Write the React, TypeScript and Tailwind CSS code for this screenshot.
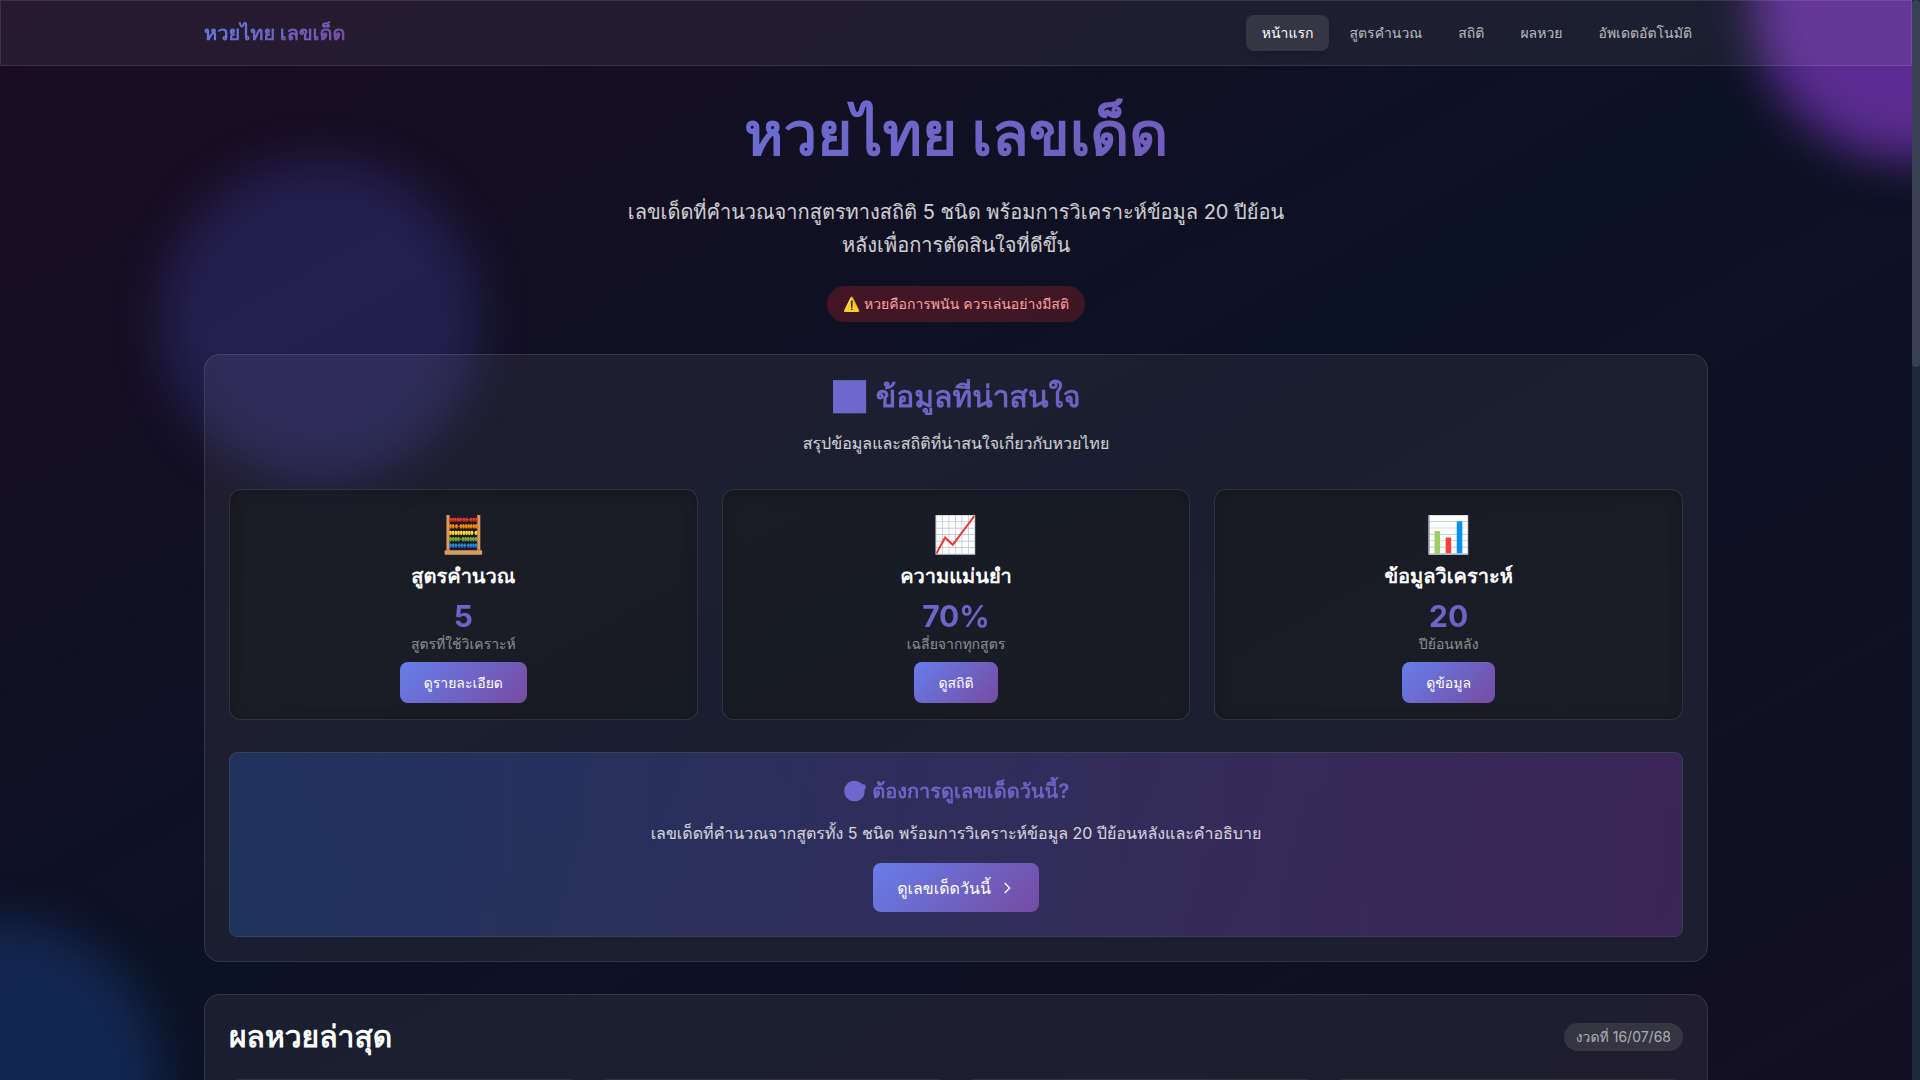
import React from "react"

const navItems = [
    { name: "หน้าแรก", active: true },
    { name: "สูตรคำนวณ", active: false },
    { name: "สถิติ", active: false },
    { name: "ผลหวย", active: false },
    { name: "อัพเดตอัตโนมัติ", active: false }
]

const stats = [
    { icon: "🧮", title: "สูตรคำนวณ", value: "5", label: "สูตรที่ใช้วิเคราะห์", action: "ดูรายละเอียด" },
    { icon: "📈", title: "ความแม่นยำ", value: "70%", label: "เฉลี่ยจากทุกสูตร", action: "ดูสถิติ" },
    { icon: "📊", title: "ข้อมูลวิเคราะห์", value: "20", label: "ปีย้อนหลัง", action: "ดูข้อมูล" }
]

const prizes = ["first", "front", "back", "last"]

const heading = "font-['Inter',sans-serif] font-bold [text-rendering:geometricPrecision]"
const gradientText = "bg-[linear-gradient(135deg,#667eea_0%,#764ba2_100%)] bg-clip-text text-transparent"
const gradientButton = "bg-[linear-gradient(135deg,#667eea_0%,#764ba2_100%)] rounded-lg text-white font-medium"
const glass = "bg-white/6 border border-white/10"

const Blobs = () => (
    <div className="absolute inset-0 overflow-hidden pointer-events-none">
        <div className="absolute -top-40 -right-40 w-80 h-80 rounded-full bg-[#ac46ff]/50 blur-xl" />
        <div className="absolute -bottom-40 -left-40 w-80 h-80 rounded-full bg-blue-500/20 blur-xl" />
        <div className="absolute top-40 left-40 w-80 h-80 rounded-full bg-indigo-500/20 blur-xl" />
    </div>
)

const Header = () => (
    <header className={`relative ${glass}`}>
        <div className="max-w-[1536px] h-16 mx-auto px-4 flex items-center justify-between">
            <a href="#" className={`text-xl ${heading} ${gradientText}`}>
                หวยไทย เลขเด็ด
            </a>
            <nav className="flex items-center gap-1">
                {navItems.map((item) => (
                    <a
                        key={item.name}
                        href="#"
                        className={
                            item.active
                                ? "px-4 py-2 rounded-lg text-sm font-medium text-white bg-white/10 shadow-lg"
                                : "px-4 py-2 rounded-lg text-sm font-medium text-white/70"
                        }
                    >
                        {item.name}
                    </a>
                ))}
            </nav>
        </div>
    </header>
)

const Hero = () => (
    <section className="flex flex-col items-center text-center">
        <h1 className={`w-full pt-1.5 pb-2 text-6xl leading-[60px] ${heading} ${gradientText}`}>หวยไทย เลขเด็ด</h1>
        <p className="max-w-2xl mt-6 text-xl leading-[33px] text-white/80">
            เลขเด็ดที่คำนวณจากสูตรทางสถิติ 5 ชนิด พร้อมการวิเคราะห์ข้อมูล 20 ปีย้อนหลังเพื่อการตัดสินใจที่ดีขึ้น
        </p>
        <div className="mt-6 px-4 py-2 rounded-full text-sm text-red-300 bg-[#7f1d28]/45">
            ⚠️ หวยคือการพนัน ควรเล่นอย่างมีสติ
        </div>
    </section>
)

const Summary = () => (
    <section className={`mt-8 p-6 rounded-2xl ${glass}`}>
        <div className="text-center">
            <h2 className={`text-3xl ${heading} ${gradientText}`}>📊 ข้อมูลที่น่าสนใจ</h2>
            <p className="mt-4 text-white/80">สรุปข้อมูลและสถิติที่น่าสนใจเกี่ยวกับหวยไทย</p>
        </div>
        <div className="mt-[34px] grid grid-cols-3 gap-6">
            {stats.map((item) => (
                <div
                    key={item.title}
                    className="flex flex-col items-center p-6 pb-4 rounded-xl border border-white/10 bg-[#18191d]/50 shadow-[inset_0_2px_16px_rgba(0,0,0,0.2)]"
                >
                    <div className="text-4xl">{item.icon}</div>
                    <h3 className={`mt-2 text-xl text-white ${heading}`}>{item.title}</h3>
                    <div className={`w-full mt-2 text-center text-3xl font-bold ${gradientText}`}>{item.value}</div>
                    <div className="text-sm text-white/50">{item.label}</div>
                    <button className={`mt-2 px-6 h-[41px] text-sm ${gradientButton}`}>{item.action}</button>
                </div>
            ))}
        </div>
        <div className="mt-8 p-6 rounded-lg border border-gray-700 bg-linear-to-r from-[#2861c8]/30 to-[#7f35b4]/30 flex flex-col items-center">
            <h3 className={`w-full text-center text-xl ${heading} ${gradientText}`}>🎯 ต้องการดูเลขเด็ดวันนี้?</h3>
            <p className="mt-4 text-white/80">
                เลขเด็ดที่คำนวณจากสูตรทั้ง 5 ชนิด พร้อมการวิเคราะห์ข้อมูล 20 ปีย้อนหลังและคำอธิบาย
            </p>
            <button className={`mt-[18px] px-6 h-[49px] flex items-center gap-2 ${gradientButton}`}>
                ดูเลขเด็ดวันนี้
                <svg className="w-4 h-4" viewBox="0 0 24 24" fill="none" stroke="currentColor" strokeWidth={2}>
                    <path strokeLinecap="round" strokeLinejoin="round" d="M9 5l7 7-7 7" />
                </svg>
            </button>
        </div>
    </section>
)

const Latest = () => (
    <section className={`mt-8 p-6 rounded-2xl ${glass}`}>
        <div className="flex items-center justify-between">
            <h2 className={`text-3xl text-white ${heading}`}>ผลหวยล่าสุด</h2>
            <span className="px-3 py-1 rounded-full text-sm text-white/60 bg-white/10">งวดที่ 16/07/68</span>
        </div>
        <div className="mt-6 grid grid-cols-4 gap-4">
            {prizes.map((prize) => (
                <div key={prize} className="h-32 rounded-xl border border-white/10 bg-[#18191d]/50" />
            ))}
        </div>
    </section>
)

const App = () => (
    <div className="flex h-screen overflow-hidden font-['Inter','Loma',sans-serif]">
        <div className="relative flex-1 overflow-hidden bg-linear-to-br from-[#1a0c22] via-[#0b1224] to-[#120f21]">
            <Blobs />
            <Header />
            <main className="relative max-w-[1536px] mx-auto px-4 py-8">
                <Hero />
                <Summary />
                <Latest />
            </main>
        </div>
        <div className="w-2 bg-gray-800">
            <div className="h-[34%] rounded-full bg-[#374151]" />
        </div>
    </div>
)

export default App
